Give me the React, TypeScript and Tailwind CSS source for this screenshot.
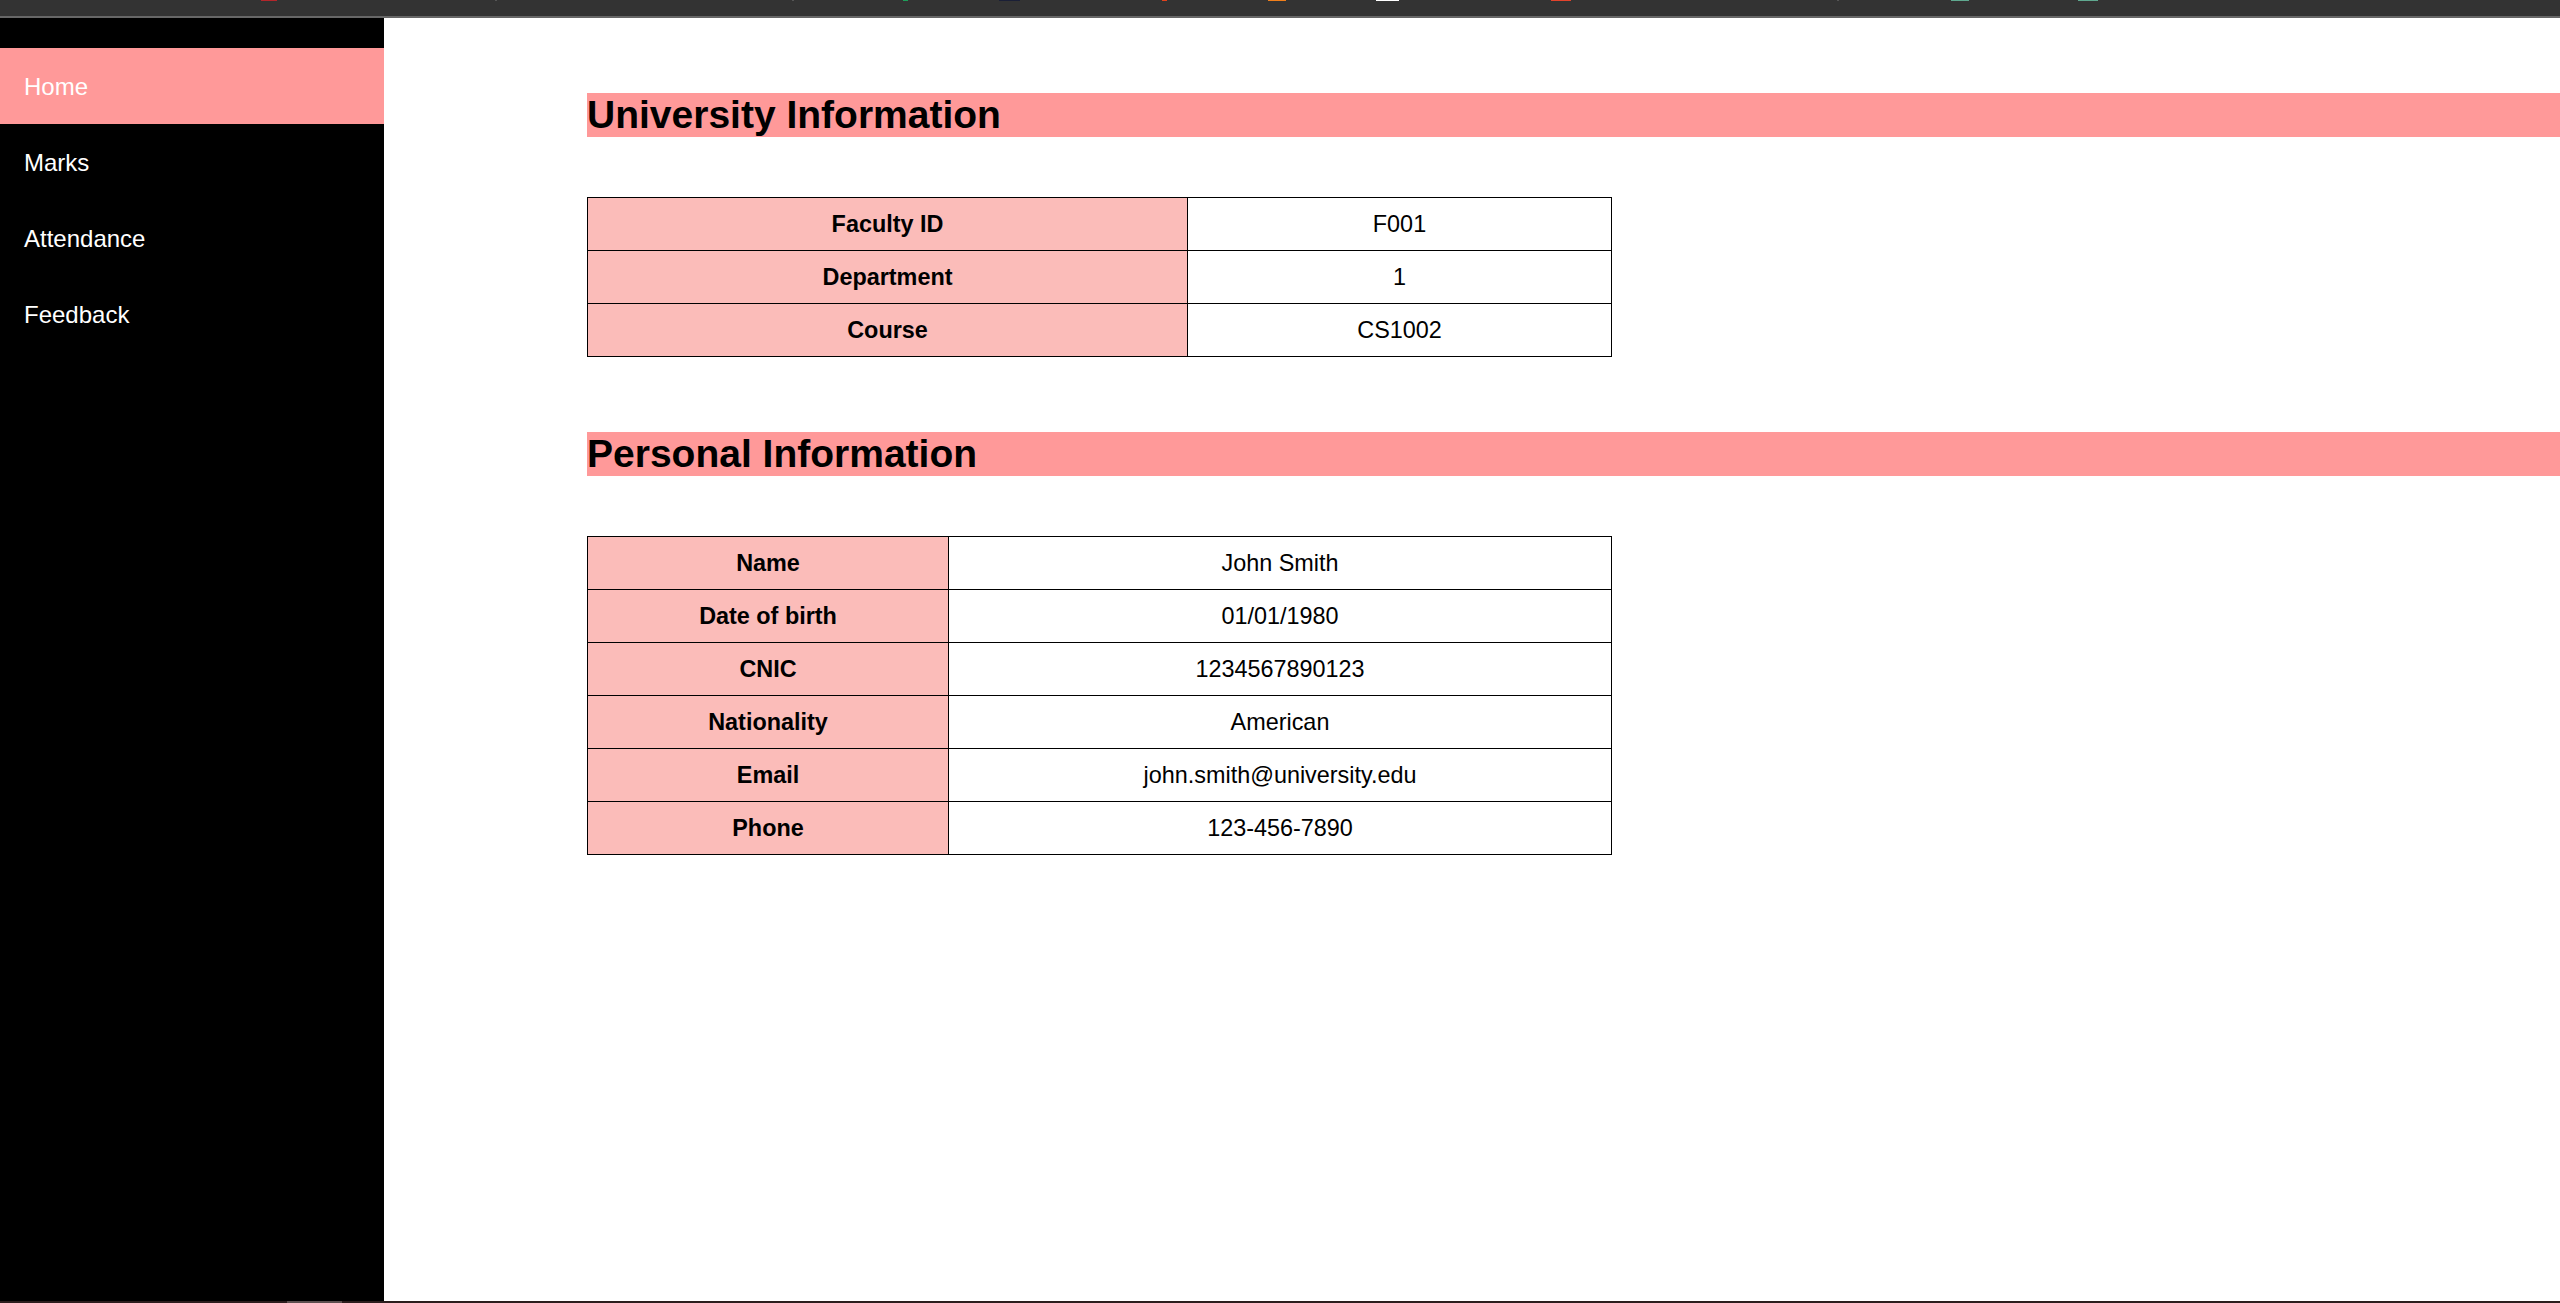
const navItems = ["Home", "Marks", "Attendance", "Feedback"];

const universityRows: [string, string][] = [
  ["Faculty ID", "F001"],
  ["Department", "1"],
  ["Course", "CS1002"],
];

const personalRows: [string, string][] = [
  ["Name", "John Smith"],
  ["Date of birth", "01/01/1980"],
  ["CNIC", "1234567890123"],
  ["Nationality", "American"],
  ["Email", "john.smith@university.edu"],
  ["Phone", "123-456-7890"],
];

// bits of tab favicons peeking in at the top edge
const tabBits = [
  { ml: "ml-[261px]", w: "w-[16px]", c: "bg-[#b3262b]" },
  { ml: "ml-[218px]", w: "w-[2px]", c: "bg-[#555555]" },
  { ml: "ml-[295px]", w: "w-[2px]", c: "bg-[#555555]" },
  { ml: "ml-[109px]", w: "w-[5px]", c: "bg-[#1e9e5a]" },
  { ml: "ml-[91px]", w: "w-[21px]", c: "bg-[#1a1f36]" },
  { ml: "ml-[142px]", w: "w-[5px]", c: "bg-[#e2421c]" },
  { ml: "ml-[101px]", w: "w-[18px]", c: "bg-[#f07f1b]" },
  { ml: "ml-[90px]", w: "w-[23px]", c: "bg-[#ffffff]" },
  { ml: "ml-[152px]", w: "w-[20px]", c: "bg-[#e3432c]" },
  { ml: "ml-[266px]", w: "w-[2px]", c: "bg-[#555555]" },
  { ml: "ml-[112px]", w: "w-[18px]", c: "bg-[#5fa88f]" },
  { ml: "ml-[109px]", w: "w-[20px]", c: "bg-[#5fa88f]" },
];

function InfoTable({
  rows,
  cols,
}: {
  rows: [string, string][];
  cols: string;
}) {
  return (
    <div className={`grid w-[1025px] border-l border-t border-black ${cols}`}>
      {rows.map(([label, value]) => (
        <div key={label} className="contents">
          <div className="flex h-[53px] items-center justify-center border-b border-r border-black bg-[#fbbcb9] pt-px text-[23.4px] font-bold text-black">
            {label}
          </div>
          <div className="flex h-[53px] items-center justify-center border-b border-r border-black bg-white pt-px text-[23.4px] text-black">
            {value}
          </div>
        </div>
      ))}
    </div>
  );
}

function SectionHeading({ title }: { title: string }) {
  return (
    <h1 className="h-[44px] bg-[#ff9999] text-[39px] font-bold leading-[44px] text-black">
      {title}
    </h1>
  );
}

export default function App() {
  return (
    <div className="flex h-[1303px] w-[2560px] flex-col overflow-hidden bg-white font-['Liberation_Sans',Arial,sans-serif]">
      <div className="flex h-[16px] items-start bg-[#333333]">
        {tabBits.map((b, i) => (
          <span key={i} className={`h-[1px] ${b.ml} ${b.w} ${b.c}`} />
        ))}
      </div>
      <div className="h-[2px] bg-[#676767]" />

      <div className="flex min-h-0 flex-1">
        <nav className="w-[384px] shrink-0 bg-black pt-[30px]">
          {navItems.map((item, i) => (
            <div
              key={item}
              className={`flex h-[76px] items-center pl-[24px] pt-px text-[24px] text-white ${
                i === 0 ? "bg-[#ff9999]" : ""
              }`}
            >
              {item}
            </div>
          ))}
        </nav>

        <main className="flex-1 pl-[203px] pt-[75px]">
          <SectionHeading title="University Information" />
          <div className="mt-[60px]">
            <InfoTable rows={universityRows} cols="grid-cols-[600px_424px]" />
          </div>

          <div className="mt-[75px]">
            <SectionHeading title="Personal Information" />
          </div>
          <div className="mt-[60px]">
            <InfoTable rows={personalRows} cols="grid-cols-[361px_663px]" />
          </div>
        </main>
      </div>

      <div className="flex h-[2px] bg-[#2b1d1d]">
        <span className="ml-[287px] h-full w-[55px] bg-[#5c4f4f]" />
      </div>
    </div>
  );
}
